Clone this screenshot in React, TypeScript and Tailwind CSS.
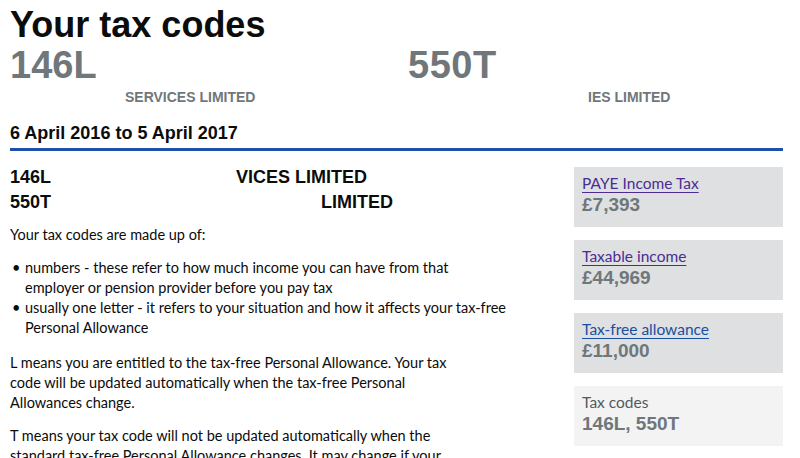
import React from "react";

const bold = { fontFamily: '"Liberation Sans", Arial, sans-serif' };
const body = { fontFamily: 'Lato, "Liberation Sans", sans-serif' };

function Box({
  label,
  value,
  link,
  color,
  light,
}: {
  label: string;
  value: string;
  link?: boolean;
  color?: string;
  light?: boolean;
}) {
  return (
    <div className={`${light ? "bg-[#f3f3f3]" : "bg-[#dee0e2]"} px-[8px] pt-[6px] pb-[10px]`}>
      {link ? (
        <a
          href="#"
          style={{ ...body, color }}
          className="block text-[15.5px] leading-[20px] underline decoration-1 underline-offset-[3px]"
        >
          {label}
        </a>
      ) : (
        <div style={body} className="text-[15.5px] leading-[20px] text-[#505a5f]">
          {label}
        </div>
      )}
      <div style={bold} className="text-[19px] leading-[24px] font-bold text-[#6f777b]">
        {value}
      </div>
    </div>
  );
}

export default function App() {
  return (
    <div className="w-[800px] h-[458px] overflow-hidden bg-white text-[#0b0c0c]">
      <div className="ml-[10px] w-[773px]">
        <h1 style={bold} className="pt-[7px] text-[36px] leading-[36px] font-bold">
          Your tax codes
        </h1>
        <div className="grid grid-cols-[398px_1fr] mt-[3px]">
          <div>
            <div style={bold} className="text-[38px] leading-[38px] font-bold text-[#6f777b]">146L</div>
            <div style={bold} className="mt-[3px] pl-[115px] text-[14px] leading-[20px] font-bold text-[#6f777b]">
              SERVICES LIMITED
            </div>
          </div>
          <div>
            <div style={bold} className="text-[38px] leading-[38px] font-bold text-[#6f777b] tracking-[0.5px]">550T</div>
            <div style={bold} className="mt-[3px] pl-[180px] text-[14px] leading-[20px] font-bold text-[#6f777b]">
              IES LIMITED
            </div>
          </div>
        </div>
        <h2
          style={bold}
          className="mt-[14px] pb-[3px] border-b-[3px] border-[#1d50a8] text-[18px] leading-[24px] font-bold"
        >
          6 April 2016 to 5 April 2017
        </h2>
        <div className="flex justify-between">
          <div className="pt-[14px]">
            <div style={bold} className="text-[18px] leading-[25px] font-bold">
              <div className="flex">
                <span className="w-[226px]">146L</span>
                <span>VICES LIMITED</span>
              </div>
              <div className="flex">
                <span className="w-[311px]">550T</span>
                <span>LIMITED</span>
              </div>
            </div>
            <div style={body} className="text-[14.5px] leading-[20px] whitespace-nowrap">
              <p className="mt-[10px]">Your tax codes are made up of:</p>
              <ul className="mt-[13px]">
                <li className="flex">
                  <span className="w-[15px] pl-[2px]">•</span>
                  <span>
                    numbers - these refer to how much income you can have from that
                    <br />
                    employer or pension provider before you pay tax
                  </span>
                </li>
                <li className="flex">
                  <span className="w-[15px] pl-[2px]">•</span>
                  <span>
                    usually one letter - it refers to your situation and how it affects your tax-free
                    <br />
                    Personal Allowance
                  </span>
                </li>
              </ul>
              <p className="mt-[15px]">
                L means you are entitled to the tax-free Personal Allowance. Your tax
                <br />
                code will be updated automatically when the tax-free Personal
                <br />
                Allowances change.
              </p>
              <p className="mt-[13px]">
                T means your tax code will not be updated automatically when the
                <br />
                standard tax-free Personal Allowance changes. It may change if your
              </p>
            </div>
          </div>
          <div className="w-[209px] pt-[16px] flex flex-col gap-[13px]">
            <Box label="PAYE Income Tax" value="£7,393" link color="#4c2c92" />
            <Box label="Taxable income" value="£44,969" link color="#4c2c92" />
            <Box label="Tax-free allowance" value="£11,000" link color="#1a4fa0" />
            <Box label="Tax codes" value="146L, 550T" light />
          </div>
        </div>
      </div>
    </div>
  );
}
